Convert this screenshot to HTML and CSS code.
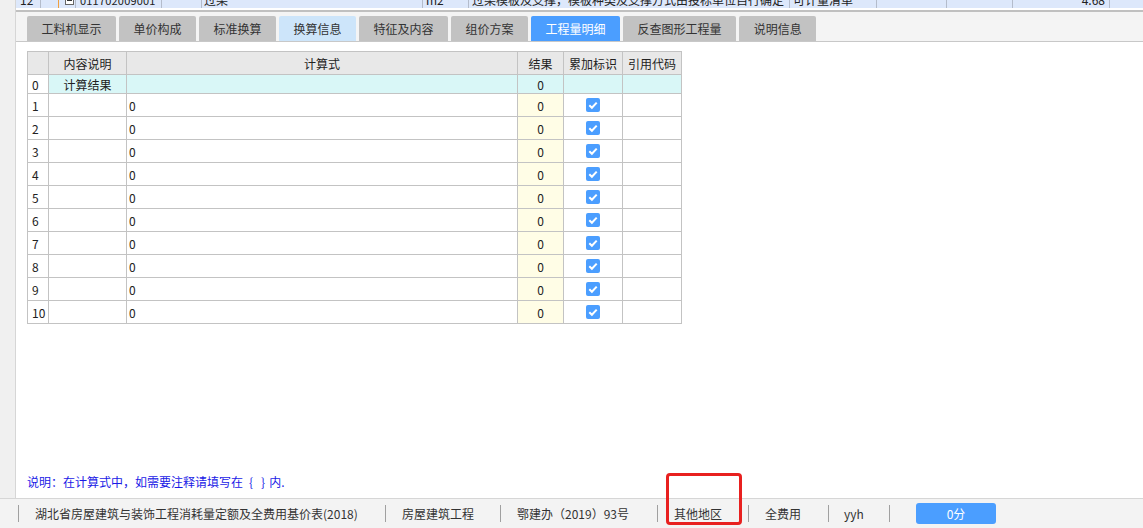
FILE: index.html
```html
<!DOCTYPE html>
<html lang="zh-CN">
<head>
<meta charset="utf-8">
<title>工程量明细</title>
<link rel="stylesheet" href="styles.css">
</head>
<body>
<div class="app">
  <div class="main">
    <div class="strip"></div>
    <div class="content">
      <div class="toprow">
        <div class="cells">
          <span class="c c-no">12</span>
          <span class="c c-tree"><i class="tline"></i><i class="tbox"></i></span>
          <span class="c c-code">011702009001</span>
          <span class="c c-type"></span>
          <span class="c c-name">过梁</span>
          <span class="c c-unit">m2</span>
          <span class="c c-desc">过梁模板及支撑，模板种类及支撑方式由投标单位自行确定</span>
          <span class="c c-cat">可计量清单</span>
          <span class="c c-e1"></span>
          <span class="c c-e2"></span>
          <span class="c c-qty">4.68</span>
          <span class="c c-rest"></span>
        </div>
      </div>
      <div class="sep"></div>
      <div class="tabs">
        <div class="tab">工料机显示</div>
        <div class="tab">单价构成</div>
        <div class="tab">标准换算</div>
        <div class="tab tab-light">换算信息</div>
        <div class="tab">特征及内容</div>
        <div class="tab">组价方案</div>
        <div class="tab tab-active">工程量明细</div>
        <div class="tab">反查图形工程量</div>
        <div class="tab">说明信息</div>
      </div>
      <div class="panel">
        <table class="grid">
          <colgroup>
            <col class="w-no"><col class="w-desc"><col class="w-expr"><col class="w-res"><col class="w-flag"><col class="w-ref">
          </colgroup>
          <thead>
            <tr class="hdr">
              <th></th><th>内容说明</th><th>计算式</th><th>结果</th><th>累加标识</th><th>引用代码</th>
            </tr>
          </thead>
          <tbody>
            <tr class="r0">
              <td class="no">0</td><td class="ctr cy">计算结果</td><td class="cy"></td><td class="ctr cy">0</td><td class="cy"></td><td class="cy"></td>
            </tr>
            <tr><td class="no">1</td><td></td><td class="ex">0</td><td class="ctr res">0</td><td class="ctr"><svg class="cb" width="14" height="14" viewBox="0 0 14 14"><rect width="14" height="14" rx="2" fill="#4b9eff"/><path d="M3.3 7.3 L5.9 9.8 L10.7 4.6" fill="none" stroke="#fff" stroke-width="2"/></svg></td><td></td></tr>
            <tr><td class="no">2</td><td></td><td class="ex">0</td><td class="ctr res">0</td><td class="ctr"><svg class="cb" width="14" height="14" viewBox="0 0 14 14"><rect width="14" height="14" rx="2" fill="#4b9eff"/><path d="M3.3 7.3 L5.9 9.8 L10.7 4.6" fill="none" stroke="#fff" stroke-width="2"/></svg></td><td></td></tr>
            <tr><td class="no">3</td><td></td><td class="ex">0</td><td class="ctr res">0</td><td class="ctr"><svg class="cb" width="14" height="14" viewBox="0 0 14 14"><rect width="14" height="14" rx="2" fill="#4b9eff"/><path d="M3.3 7.3 L5.9 9.8 L10.7 4.6" fill="none" stroke="#fff" stroke-width="2"/></svg></td><td></td></tr>
            <tr><td class="no">4</td><td></td><td class="ex">0</td><td class="ctr res">0</td><td class="ctr"><svg class="cb" width="14" height="14" viewBox="0 0 14 14"><rect width="14" height="14" rx="2" fill="#4b9eff"/><path d="M3.3 7.3 L5.9 9.8 L10.7 4.6" fill="none" stroke="#fff" stroke-width="2"/></svg></td><td></td></tr>
            <tr><td class="no">5</td><td></td><td class="ex">0</td><td class="ctr res">0</td><td class="ctr"><svg class="cb" width="14" height="14" viewBox="0 0 14 14"><rect width="14" height="14" rx="2" fill="#4b9eff"/><path d="M3.3 7.3 L5.9 9.8 L10.7 4.6" fill="none" stroke="#fff" stroke-width="2"/></svg></td><td></td></tr>
            <tr><td class="no">6</td><td></td><td class="ex">0</td><td class="ctr res">0</td><td class="ctr"><svg class="cb" width="14" height="14" viewBox="0 0 14 14"><rect width="14" height="14" rx="2" fill="#4b9eff"/><path d="M3.3 7.3 L5.9 9.8 L10.7 4.6" fill="none" stroke="#fff" stroke-width="2"/></svg></td><td></td></tr>
            <tr><td class="no">7</td><td></td><td class="ex">0</td><td class="ctr res">0</td><td class="ctr"><svg class="cb" width="14" height="14" viewBox="0 0 14 14"><rect width="14" height="14" rx="2" fill="#4b9eff"/><path d="M3.3 7.3 L5.9 9.8 L10.7 4.6" fill="none" stroke="#fff" stroke-width="2"/></svg></td><td></td></tr>
            <tr><td class="no">8</td><td></td><td class="ex">0</td><td class="ctr res">0</td><td class="ctr"><svg class="cb" width="14" height="14" viewBox="0 0 14 14"><rect width="14" height="14" rx="2" fill="#4b9eff"/><path d="M3.3 7.3 L5.9 9.8 L10.7 4.6" fill="none" stroke="#fff" stroke-width="2"/></svg></td><td></td></tr>
            <tr><td class="no">9</td><td></td><td class="ex">0</td><td class="ctr res">0</td><td class="ctr"><svg class="cb" width="14" height="14" viewBox="0 0 14 14"><rect width="14" height="14" rx="2" fill="#4b9eff"/><path d="M3.3 7.3 L5.9 9.8 L10.7 4.6" fill="none" stroke="#fff" stroke-width="2"/></svg></td><td></td></tr>
            <tr><td class="no">10</td><td></td><td class="ex">0</td><td class="ctr res">0</td><td class="ctr"><svg class="cb" width="14" height="14" viewBox="0 0 14 14"><rect width="14" height="14" rx="2" fill="#4b9eff"/><path d="M3.3 7.3 L5.9 9.8 L10.7 4.6" fill="none" stroke="#fff" stroke-width="2"/></svg></td><td></td></tr>
          </tbody>
        </table>
        <p class="note">说明：在计算式中，如需要注释请填写在<span class="br">{</span><span class="br br2">}</span><span class="br3">内.</span></p>
      </div>
    </div>
  </div>
  <div class="status">
    <span class="si si-1">湖北省房屋建筑与装饰工程消耗量定额及全费用基价表(2018)</span>
    <span class="si si-2">房屋建筑工程</span>
    <span class="si si-3">鄂建办（2019）93号</span>
    <span class="si si-4">其他地区</span>
    <span class="si si-5">全费用</span>
    <span class="si si-6">yyh</span>
    <span class="si si-7"><span class="score">0分</span></span>
  </div>
  <div class="annot"></div>
</div>
</body>
</html>
```

FILE: styles.css
```css
* { box-sizing: border-box; }
html, body { margin: 0; padding: 0; }
body {
  font-family: "Noto Sans CJK SC", "Noto Sans", sans-serif;
  font-size: 12px;
  color: #222;
  background: #fff;
}
.app {
  position: relative;
  width: 1143px;
  height: 528px;
  display: flex;
  flex-direction: column;
  overflow: hidden;
}
.main {
  flex: 1;
  display: flex;
  min-height: 0;
}
.strip {
  width: 16px;
  flex: none;
  background: #f0f0f0;
  border-right: 1px solid #d6d6d6;
}
.content {
  flex: 1;
  display: flex;
  flex-direction: column;
  min-width: 0;
}
/* top partially visible row */
.toprow {
  height: 8px;
  overflow: hidden;
  display: flex;
  align-items: flex-end;
  background: #dde8fb;
}
.cells {
  display: flex;
  width: 100%;
  height: 14px;
  flex: none;
}
.c {
  flex: none;
  height: 14px;
  line-height: 12px;
  font-size: 12px;
  border-right: 1px solid #b4bccb;
  padding-left: 3px;
  white-space: nowrap;
  overflow: hidden;
  color: #222;
  font-family: "Noto Sans CJK SC", "DejaVu Sans", sans-serif;
}
.c-no { width: 25px; padding-left: 4px; }
.c-tree { width: 35px; position: relative; }
.tline {
  position: absolute; left: 17px; top: 0; width: 1px; height: 14px;
  background: #f0a040;
}
.tbox {
  position: absolute; left: 24px; top: 2px; width: 9px; height: 9px;
  border: 1px solid #666; background: #fff;
}
.tbox::after {
  content: ""; position: absolute; left: 1px; top: 3px; width: 5px; height: 1px; background: #333;
}
.c-code { width: 86px; padding-left: 4px; font-size: 11px; letter-spacing: 0.2px; }
.c-type { width: 40px; }
.c-name { width: 221px; padding-left: 2px; }
.c-unit { width: 46px; }
.c-desc { width: 321px; }
.c-cat { width: 87px; }
.c-e1 { width: 70px; }
.c-e2 { width: 66px; }
.c-qty { width: 97px; text-align: right; padding-right: 4px; }
.c-rest { flex: 1; border-right: none; }

.sep {
  height: 4px;
  border-top: 2px solid #fff;
  background: #c0c0c0;
}
.tabs {
  display: flex;
  gap: 3px;
  background: #f4f4f4;
  padding: 4px 0 0 11px;
  border-bottom: 1px solid #c8c8c8;
}
.tab {
  height: 25px;
  line-height: 25px;
  padding: 0 14.5px;
  background: #c2c2c2;
  color: #333;
  font-size: 12px;
  border-radius: 2px 2px 0 0;
  white-space: nowrap;
}
.tab-light { background: #cde5fa; }
.tab-active { background: #4b9eff; color: #fff; }

.panel {
  flex: 1;
  display: flex;
  flex-direction: column;
  padding: 9px 0 0 11px;
  background: #fff;
}
.grid {
  border-collapse: collapse;
  table-layout: fixed;
  width: 655px;
  font-size: 12px;
}
.w-no { width: 21px; }
.w-desc { width: 78px; }
.w-expr { width: 391px; }
.w-res { width: 46px; }
.w-flag { width: 59px; }
.w-ref { width: 59px; }
.grid th, .grid td {
  border: 1px solid #c3c3c3;
  padding: 0;
  white-space: nowrap;
  overflow: hidden;
}
.grid th {
  background: #e8e8e8;
  font-weight: normal;
  color: #222;
  height: 23px;
  text-align: center;
}
.grid td { height: 23px; color: #222; }
.grid .r0 td { height: 19px; }
.grid td.no { padding-left: 4px; background: #fff; }
.grid td.cy { background: #d9f7f7; }
.grid td.ctr { text-align: center; }
.grid td.res { background: #fffde6; }
.grid td.ex { padding-left: 2px; }
.cb { display: block; margin: 0 auto; }

.note {
  margin: auto 0 0 0;
  padding-bottom: 8px;
  line-height: 16px;
  color: #1a1ae6;
  font-size: 12px;
}
.br { display: inline-block; padding-left: 6px; }
.br2 { padding-left: 8px; }
.br3 { display: inline-block; padding-left: 4px; }

.status {
  height: 30px;
  flex: none;
  display: flex;
  align-items: center;
  padding-left: 18px;
  background: #f3f3f3;
  border-top: 1px solid #d6d6d6;
}
.si {
  height: 17px;
  line-height: 17px;
  border-left: 1px solid #a0a0a0;
  padding-left: 16px;
  color: #333;
  font-size: 12px;
  white-space: nowrap;
  flex: none;
}
.si-1 { width: 367px; }
.si-2 { width: 115px; }
.si-3 { width: 157px; }
.si-4 { width: 91px; }
.si-5 { width: 80px; }
.si-6 { width: 61px; padding-left: 15px; }
.si-7 { padding-left: 26px; height: 17px; display: flex; align-items: center; overflow: visible; }
.score {
  display: block;
  width: 80px;
  height: 21px;
  line-height: 21px;
  border-radius: 3px;
  background: #4b9eff;
  color: #fff;
  text-align: center;
  font-size: 12px;
}
.annot {
  position: absolute;
  left: 666px;
  top: 473px;
  width: 76px;
  height: 52px;
  border: 3px solid #e8201f;
  border-radius: 4px;
}
```
